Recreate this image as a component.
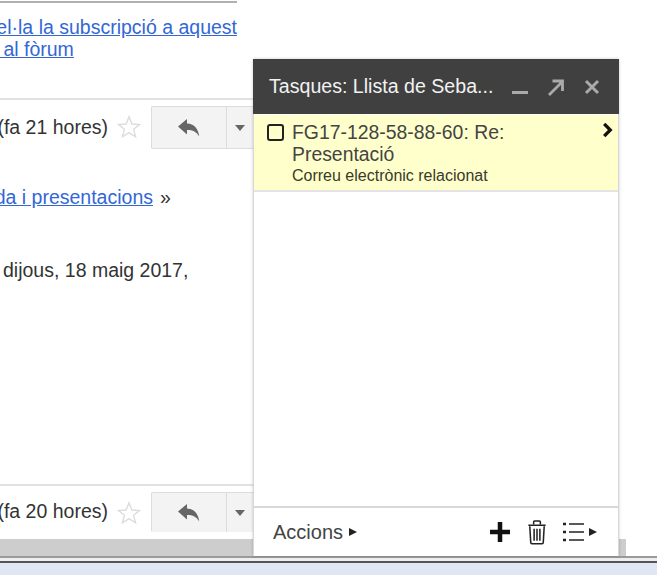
<div class="page">
  <div class="thread">
    <div class="top-rule"></div>
    <div class="links">
      <a href="#a" class="line l1">el·la la subscripció a aquest</a>
      <a href="#a" class="line l2">&nbsp;al fòrum</a>
    </div>
    <div class="msg-row first">
      <span class="time"><span>(fa 21 hores)</span></span>
      <svg class="star" viewBox="0 0 24 24" width="24" height="24"><path d="M12 1.8l2.9 7.2 7.6.5-5.900 4.800 1.900 7.500L12 17.700l-6.500 4.100 1.900-7.500L1.500 9.500l7.600-.5z" fill="#fff" stroke="#dcdcdc" stroke-width="1.400"/></svg>
      <div class="btns">
        <div class="reply"><svg viewBox="0 0 22 18" width="22" height="18"><path d="M0 7.500L9 0v4.600c7 .4 11 4.500 12.300 13-2.700-4.700-6.300-6.600-12.300-6.600v4.400z" fill="#666"/></svg></div>
        <div class="more"><span class="caret"></span></div>
      </div>
    </div>
    <div class="crumb"><a href="#a">da i presentacions</a><span class="raquo">»</span></div>
    <div class="date">dijous, 18 maig 2017,</div>
    <div class="spacer"></div>
    <div class="msg-row last">
      <span class="time"><span>(fa 20 hores)</span></span>
      <svg class="star" viewBox="0 0 24 24" width="24" height="24"><path d="M12 1.8l2.9 7.2 7.6.5-5.900 4.800 1.900 7.500L12 17.700l-6.500 4.100 1.900-7.500L1.500 9.500l7.600-.5z" fill="#fff" stroke="#dcdcdc" stroke-width="1.400"/></svg>
      <div class="btns open">
        <div class="reply"><svg viewBox="0 0 22 18" width="22" height="18"><path d="M0 7.500L9 0v4.600c7 .4 11 4.500 12.300 13-2.700-4.700-6.300-6.600-12.300-6.600v4.400z" fill="#666"/></svg></div>
        <div class="more"><span class="caret"></span></div>
      </div>
    </div>
    <div class="hscroll"></div>
  </div>
  <div class="window-edge"></div>
  <div class="taskbar"></div>

  <div class="scroll-stub"></div>
  <aside class="tasks">
    <header class="head">
      <span class="title">Tasques: Llista de Seba...</span>
      <svg class="ic-min" viewBox="0 0 16 16" width="16" height="16"><rect x="0" y="12" width="16" height="3" fill="#aaa"/></svg>
      <svg class="ic-pop" viewBox="0 0 18 18" width="18" height="18"><path d="M2 17L15 4M5.500 3H15.500V13" fill="none" stroke="#aaa" stroke-width="2.800"/></svg>
      <svg class="ic-x" viewBox="0 0 16 16" width="16" height="16"><path d="M2 2l12 12M14 2L2 14" fill="none" stroke="#aaa" stroke-width="3"/></svg>
    </header>
    <div class="item">
      <span class="check"></span>
      <div class="item-text">
        <div class="item-title">FG17-128-58-88-60: Re: Presentació</div>
        <div class="item-sub">Correu electrònic relacionat</div>
      </div>
      <svg class="chev" viewBox="0 0 10 14" width="11" height="16"><path d="M2 1.500L7.500 7 2 12.500" fill="none" stroke="#111" stroke-width="3"/></svg>
    </div>
    <div class="list"></div>
    <footer class="foot">
      <span class="acc">Accions</span><span class="tri small"></span>
      <span class="grow"></span>
      <svg class="plus" viewBox="0 0 20 20" width="20" height="20"><path d="M10 0v20M0 10h20" stroke="#111" stroke-width="4.500"/></svg>
      <svg class="trash" viewBox="0 0 20 26" width="20" height="25"><path d="M1 5.500h18M6.500 4.500V2c0-.6.400-1 1-1h5c.6 0 1 .4 1 1v2.500M2.500 6.500l1 17c0 .8.500 1.300 1.300 1.300h10.400c.8 0 1.300-.5 1.300-1.300l1-17M7 9v12.500M10 9v12.500M13 9v12.500" fill="none" stroke="#222" stroke-width="1.600"/></svg>
      <svg class="listic" viewBox="0 0 22 20" width="22" height="20"><path d="M1 2h3M1 10h3M1 18h3" stroke="#222" stroke-width="2.600"/><path d="M7 2h15M7 10h15M7 18h15" stroke="#222" stroke-width="1.700"/></svg>
      <span class="tri next"></span>
    </footer>
  </aside>
</div>

<style>
  :global(body) {
    margin: 0;
    background: #fff;
  }
  .page {
    position: relative;
    width: 657px;
    height: 575px;
    overflow: hidden;
    display: flex;
    flex-direction: column;
    font-family: "Liberation Sans", Arial, sans-serif;
    color: #333;
  }
  .thread {
    height: 556px;
    display: flex;
    flex-direction: column;
    flex: none;
  }
  .top-rule {
    width: 237px;
    height: 2px;
    margin-top: 1px;
    background: #b0b0b0;
  }
  a {
    color: #3367d6;
    text-decoration: underline;
  }
  .links {
    display: flex;
    flex-direction: column;
    width: 237px;
    margin-top: 13px;
    font-size: 19.5px;
    line-height: 22px;
    white-space: nowrap;
    align-items: flex-end;
  }
  .l2 {
    align-self: flex-start;
    margin-left: -2px;
  }
  .msg-row {
    width: 253px;
    display: flex;
    align-items: flex-start;
    border-top: 2px solid #e2e2e2;
    font-size: 19.5px;
    flex: none;
  }
  .first {
    margin-top: 38px;
    height: 58px;
  }
  .last {
    height: 53px;
  }
  .time {
    width: 108px;
    flex: none;
    display: flex;
    justify-content: flex-end;
    white-space: nowrap;
    line-height: 22px;
  }
  .first .time {
    margin-top: 16px;
  }
  .last .time {
    margin-top: 14px;
  }
  .star {
    margin: 15px 0 0 9px;
    flex: none;
  }
  .btns {
    margin: 6px 0 0 10px;
    width: 102px;
    height: 43px;
    box-sizing: border-box;
    display: flex;
    background: #f3f3f3;
    border: 1px solid #dcdcdc;
    border-right: 0;
    border-radius: 2px 0 0 2px;
    flex: none;
  }
  .btns.open {
    height: 40px;
    border-bottom: 0;
  }
  .reply {
    width: 74px;
    display: flex;
    align-items: center;
    justify-content: center;
    border-right: 1px solid #dcdcdc;
  }
  .more {
    flex: 1;
    display: flex;
    align-items: center;
    justify-content: center;
  }
  .caret {
    border: 5px solid transparent;
    border-top: 6px solid #666;
    border-bottom: 0;
  }
  .crumb {
    width: 253px;
    margin-top: 27px;
    font-size: 19.5px;
    line-height: 24px;
    display: flex;
    white-space: nowrap;
  }
  .crumb a {
    width: 153px;
    flex: none;
    direction: rtl;
    overflow: hidden;
    text-align: right;
  }
  .raquo {
    margin-left: 7px;
  }
  .date {
    margin-top: 49px;
    padding-left: 3px;
    font-size: 19.5px;
    line-height: 24px;
  }
  .spacer {
    flex: 1;
  }
  .hscroll {
    width: 253px;
    height: 17px;
    background: #cdcdcd;
    flex: none;
  }
  .window-edge {
    height: 7px;
    flex: none;
    box-sizing: border-box;
    border-top: 2px solid #9a9a9a;
    border-bottom: 2px solid #555;
    background: #eee;
  }
  .taskbar {
    flex: 1;
    background: #e0e6f3;
  }
  .scroll-stub {
    position: absolute;
    left: 619px;
    top: 539px;
    width: 7px;
    height: 17px;
    background: #cdcdcd;
  }
  .tasks {
    position: absolute;
    left: 253px;
    top: 59px;
    width: 366px;
    height: 497px;
    box-sizing: border-box;
    display: flex;
    flex-direction: column;
    background: #fff;
    border-left: 1px solid #d8d8d8;
    border-right: 1px solid #d8d8d8;
    box-shadow: 0 0 3px rgba(0, 0, 0, 0.2);
  }
  .head {
    height: 55px;
    margin: 0 -1px;
    padding: 0 19px 0 16px;
    background: #404040;
    display: flex;
    align-items: center;
    flex: none;
  }
  .title {
    color: #f2f2f2;
    font-size: 19.6px;
    flex: 1;
    white-space: nowrap;
  }
  .ic-min {
    margin-right: 19px;
  }
  .ic-pop {
    margin-right: 19px;
  }
  .item {
    height: 77px;
    margin-top: 1px;
    box-sizing: border-box;
    background: #ffc;
    border-bottom: 2px solid #e4e4e4;
    display: flex;
    align-items: flex-start;
    padding: 6px 5px 0 13px;
    flex: none;
  }
  .check {
    width: 17px;
    height: 17px;
    margin-top: 3px;
    border: 2px solid #222;
    border-radius: 3px;
    box-sizing: border-box;
    flex: none;
  }
  .item-text {
    width: 235px;
    margin-left: 8px;
  }
  .item-title {
    font-size: 19.4px;
    line-height: 22px;
    color: #444;
  }
  .item-sub {
    margin-top: 1px;
    font-size: 16px;
    line-height: 20px;
    color: #3a3a2a;
  }
  .chev {
    margin-left: auto;
    margin-top: 1px;
  }
  .list {
    flex: 1;
    border-bottom: 2px solid #d8d8d8;
  }
  .foot {
    height: 48px;
    flex: none;
    padding: 0 21px 0 19px;
    display: flex;
    align-items: center;
  }
  .acc {
    font-size: 20px;
    color: #444;
  }
  .tri {
    width: 0;
    height: 0;
    border-left: 8px solid #222;
    border-top: 4px solid transparent;
    border-bottom: 4px solid transparent;
  }
  .small {
    margin-left: 6px;
  }
  .next {
    margin-left: 5px;
  }
  .grow {
    flex: 1;
  }
  .trash {
    margin-left: 17px;
  }
  .listic {
    margin-left: 15px;
  }
</style>
